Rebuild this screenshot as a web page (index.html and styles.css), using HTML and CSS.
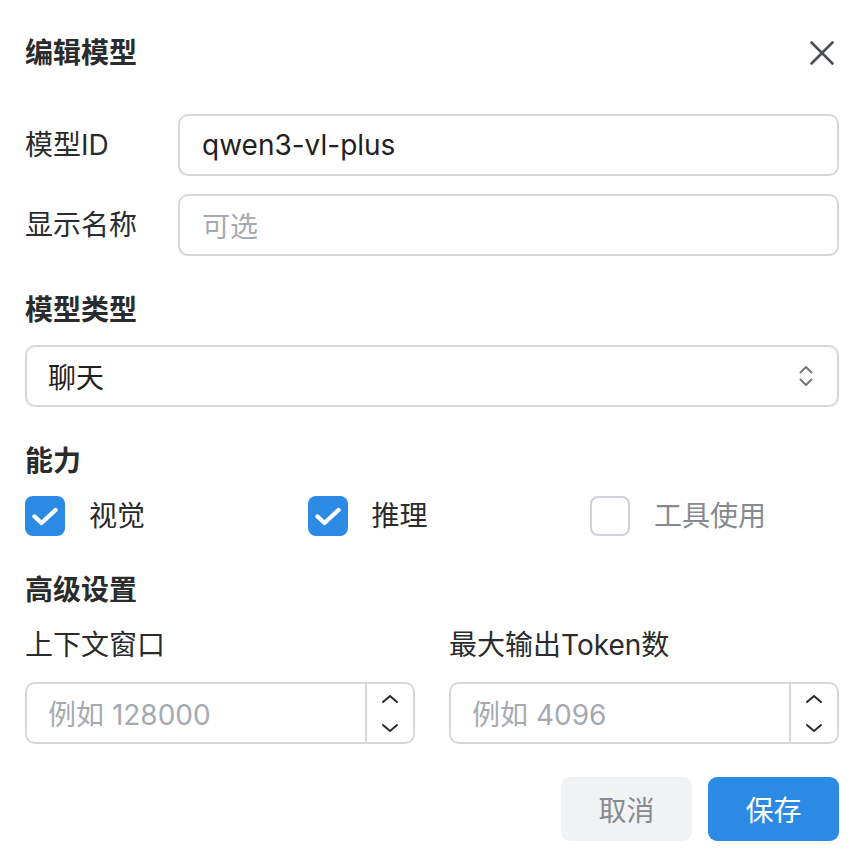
FILE: index.html
```html
<!DOCTYPE html>
<html lang="zh-CN">
<head>
<meta charset="utf-8">
<title>编辑模型</title>
<link rel="stylesheet" href="styles.css">
</head>
<body>
<div class="dialog">
  <header class="dialog-header">
    <h2 class="title">编辑模型</h2>
    <button class="close" aria-label="关闭">
      <svg width="24" height="24" viewBox="0 0 24 24"><path d="M1.5 1.5 L22.5 22.5 M22.5 1.5 L1.5 22.5" stroke="#4b4e53" stroke-width="2.6" stroke-linecap="round" fill="none"/></svg>
    </button>
  </header>

  <div class="fields">
    <div class="field-row">
      <span class="row-label">模型ID</span>
      <div class="input"><span class="value">qwen3-vl-plus</span></div>
    </div>
    <div class="field-row">
      <span class="row-label">显示名称</span>
      <div class="input"><span class="placeholder">可选</span></div>
    </div>
  </div>

  <section class="section">
    <h3 class="section-title">模型类型</h3>
    <div class="select">
      <span class="value">聊天</span>
      <svg class="select-arrows" width="14" height="22" viewBox="0 0 14 22"><path d="M1.5 7.5 L7 2 L12.5 7.5 M1.5 14.5 L7 20 L12.5 14.5" stroke="#707479" stroke-width="2" stroke-linecap="round" stroke-linejoin="round" fill="none"/></svg>
    </div>
  </section>

  <section class="section">
    <h3 class="section-title">能力</h3>
    <div class="caps">
      <label class="cap">
        <span class="checkbox checked"><svg width="40" height="40" viewBox="0 0 40 40"><path d="M9.5 20.5 L16.5 27 L30.5 14" stroke="#fff" stroke-width="4.4" stroke-linecap="round" stroke-linejoin="round" fill="none"/></svg></span>
        <span class="cap-text">视觉</span>
      </label>
      <label class="cap">
        <span class="checkbox checked"><svg width="40" height="40" viewBox="0 0 40 40"><path d="M9.5 20.5 L16.5 27 L30.5 14" stroke="#fff" stroke-width="4.4" stroke-linecap="round" stroke-linejoin="round" fill="none"/></svg></span>
        <span class="cap-text">推理</span>
      </label>
      <label class="cap">
        <span class="checkbox"></span>
        <span class="cap-text muted">工具使用</span>
      </label>
    </div>
  </section>

  <section class="section">
    <h3 class="section-title">高级设置</h3>
    <div class="adv-grid">
      <div class="adv-field">
        <div class="sub-label">上下文窗口</div>
        <div class="number">
          <div class="number-value"><span class="placeholder">例如 128000</span></div>
          <div class="spin">
            <span class="spin-btn"><svg width="18" height="10" viewBox="0 0 18 10"><path d="M2 8 L9 2 L16 8" stroke="#2b2b2b" stroke-width="2" stroke-linecap="round" stroke-linejoin="round" fill="none"/></svg></span>
            <span class="spin-btn"><svg width="18" height="10" viewBox="0 0 18 10"><path d="M2 2 L9 8 L16 2" stroke="#2b2b2b" stroke-width="2" stroke-linecap="round" stroke-linejoin="round" fill="none"/></svg></span>
          </div>
        </div>
      </div>
      <div class="adv-field">
        <div class="sub-label">最大输出Token数</div>
        <div class="number">
          <div class="number-value"><span class="placeholder">例如 4096</span></div>
          <div class="spin">
            <span class="spin-btn"><svg width="18" height="10" viewBox="0 0 18 10"><path d="M2 8 L9 2 L16 8" stroke="#2b2b2b" stroke-width="2" stroke-linecap="round" stroke-linejoin="round" fill="none"/></svg></span>
            <span class="spin-btn"><svg width="18" height="10" viewBox="0 0 18 10"><path d="M2 2 L9 8 L16 2" stroke="#2b2b2b" stroke-width="2" stroke-linecap="round" stroke-linejoin="round" fill="none"/></svg></span>
          </div>
        </div>
      </div>
    </div>
  </section>

  <footer class="actions">
    <button class="btn btn-cancel">取消</button>
    <button class="btn btn-primary">保存</button>
  </footer>
</div>
</body>
</html>
```

FILE: styles.css
```css
* { box-sizing: border-box; }

html, body {
  margin: 0;
  padding: 0;
  background: #ffffff;
}

body {
  font-family: "Inter", "Noto Sans CJK SC", sans-serif;
  font-size: 28px;
  color: #222426;
}

.dialog {
  width: 864px;
  height: 864px;
  padding: 33px 25px 0;
  display: flex;
  flex-direction: column;
}

.dialog-header {
  height: 40px;
  display: flex;
  align-items: center;
  justify-content: space-between;
}

.title {
  margin: 0;
  font-size: 28px;
  line-height: 40px;
  font-weight: 700;
  color: #2a2b2d;
}

.close {
  border: 0;
  background: transparent;
  padding: 0;
  width: 24px;
  height: 24px;
  margin-right: 5px;
  display: flex;
  align-items: center;
  justify-content: center;
}

.fields {
  margin-top: 41px;
  display: flex;
  flex-direction: column;
  gap: 18px;
}

.field-row {
  display: flex;
  align-items: center;
}

.row-label {
  width: 153px;
  flex: none;
  line-height: 40px;
  color: #2a2b2d;
}

.input {
  flex: 1;
  height: 62px;
  border: 2px solid #d6d8db;
  border-radius: 10px;
  padding: 0 22px;
  display: flex;
  align-items: center;
}

.value {
  color: #1f2022;
}

.placeholder {
  color: #a6aab0;
}

.section {
  margin-top: 34px;
}

.section-title {
  margin: 0 0 15px;
  font-size: 28px;
  line-height: 40px;
  font-weight: 700;
  color: #2a2b2d;
}

.select {
  height: 62px;
  border: 2px solid #d6d8db;
  border-radius: 10px;
  padding: 0 24px 0 21px;
  display: flex;
  align-items: center;
  justify-content: space-between;
}

.caps {
  display: grid;
  grid-template-columns: repeat(3, 1fr);
  column-gap: 33.5px;
}

.cap {
  display: flex;
  align-items: center;
  gap: 24px;
  height: 40px;
}

.checkbox {
  width: 40px;
  height: 40px;
  border-radius: 8px;
  border: 2px solid #cfd2d6;
  background: #fff;
  flex: none;
  display: flex;
  align-items: center;
  justify-content: center;
}

.checkbox.checked {
  background: #2b8ae4;
  border: 0;
}

.cap-text {
  color: #2a2b2d;
  line-height: 40px;
}

.cap-text.muted {
  color: #868a90;
}

.adv-grid {
  display: grid;
  grid-template-columns: 1fr 1fr;
  column-gap: 34px;
}

.sub-label {
  line-height: 40px;
  margin-bottom: 17px;
  color: #2a2b2d;
}

.number {
  height: 62px;
  border: 2px solid #d6d8db;
  border-radius: 10px;
  display: flex;
}

.number-value {
  flex: 1;
  padding-left: 21px;
  display: flex;
  align-items: center;
}

.spin {
  width: 48px;
  border-left: 2px solid #d6d8db;
  display: flex;
  flex-direction: column;
}

.spin-btn {
  flex: 1;
  display: flex;
  align-items: center;
  justify-content: center;
}

.actions {
  margin-top: 33px;
  display: flex;
  justify-content: flex-end;
  gap: 16px;
}

.btn {
  width: 131px;
  height: 64px;
  border: 0;
  border-radius: 9px;
  font-family: "Inter", "Noto Sans CJK SC", sans-serif;
  font-size: 28px;
  padding: 0;
}

.btn-cancel {
  background: #f1f2f4;
  color: #878b91;
}

.btn-primary {
  background: #2b8ae4;
  color: #ffffff;
}
```
